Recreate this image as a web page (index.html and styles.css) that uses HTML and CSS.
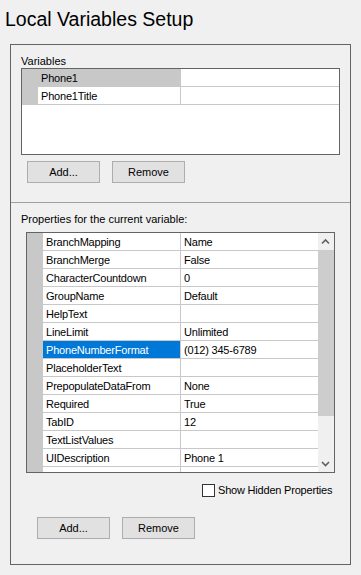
FILE: index.html
```html
<!DOCTYPE html>
<html lang="en">
<head>
  <meta charset="UTF-8" />
  <title>Local Variables Setup</title>
  <link rel="stylesheet" href="styles.css">
</head>
<body>
  <h1>Local Variables Setup</h1>

  <div class="group">
    <div class="top">
      <div class="label">Variables</div>
      <div class="vargrid">
        <div class="row selected">
          <div class="rh"></div>
          <div class="cell name">Phone1</div>
          <div class="cell value"></div>
        </div>
        <div class="row">
          <div class="rh"></div>
          <div class="cell name">Phone1Title</div>
          <div class="cell value"></div>
        </div>
      </div>
      <div class="buttons">
        <button>Add...</button>
        <button>Remove</button>
      </div>
    </div>

    <div class="bottom">
      <div class="label">Properties for the current variable:</div>
      <div class="propgrid">
        <div class="rows">
          <div class="row"><div class="rh"></div><div class="cell name">BranchMapping</div><div class="cell value">Name</div></div>
          <div class="row"><div class="rh"></div><div class="cell name">BranchMerge</div><div class="cell value">False</div></div>
          <div class="row"><div class="rh"></div><div class="cell name">CharacterCountdown</div><div class="cell value">0</div></div>
          <div class="row"><div class="rh"></div><div class="cell name">GroupName</div><div class="cell value">Default</div></div>
          <div class="row"><div class="rh"></div><div class="cell name">HelpText</div><div class="cell value"></div></div>
          <div class="row"><div class="rh"></div><div class="cell name">LineLimit</div><div class="cell value">Unlimited</div></div>
          <div class="row active"><div class="rh"></div><div class="cell name">PhoneNumberFormat</div><div class="cell value">(012) 345-6789</div></div>
          <div class="row"><div class="rh"></div><div class="cell name">PlaceholderText</div><div class="cell value"></div></div>
          <div class="row"><div class="rh"></div><div class="cell name">PrepopulateDataFrom</div><div class="cell value">None</div></div>
          <div class="row"><div class="rh"></div><div class="cell name">Required</div><div class="cell value">True</div></div>
          <div class="row"><div class="rh"></div><div class="cell name">TabID</div><div class="cell value">12</div></div>
          <div class="row"><div class="rh"></div><div class="cell name">TextListValues</div><div class="cell value"></div></div>
          <div class="row"><div class="rh"></div><div class="cell name">UIDescription</div><div class="cell value">Phone 1</div></div>
          <!-- next row is scrolled out of view -->
          <div class="row"><div class="rh"></div><div class="cell name"></div><div class="cell value"></div></div>
        </div>
        <div class="scrollbar">
          <div class="arrow">
            <svg width="16" height="17" viewBox="0 0 16 17"><polyline points="4,10.5 7.5,7 11,10.5" fill="none" stroke="#606060" stroke-width="1.6" /></svg>
          </div>
          <div class="track"><div class="thumb"></div></div>
          <div class="arrow">
            <svg width="16" height="17" viewBox="0 0 16 17"><polyline points="4,7 7.5,10.5 11,7" fill="none" stroke="#606060" stroke-width="1.6" /></svg>
          </div>
        </div>
      </div>
      <label class="check"><span class="box"></span>Show Hidden Properties</label>
      <div class="buttons lower">
        <button>Add...</button>
        <button>Remove</button>
      </div>
    </div>
  </div>
</body>
</html>
```

FILE: styles.css
```css
body {
  background-color: #f0f0f0;
  font-family: "Liberation Sans", Arial, sans-serif;
  font-size: 11px;
  color: #000;
  margin: 0;
  padding: 0;
}

h1 {
  margin: 0;
  padding: 7px 0 0 5px;
  font-size: 19.5px;
  font-weight: normal;
  line-height: 24px;
}

.group {
  margin: 13px 0 0 10px;
  width: 341px;
  border: 1px solid #646464;
  box-sizing: border-box;
}

.top {
  padding: 10px 0 19px 10px;
}

.bottom {
  border-top: 1px solid #a0a0a0;
  padding: 10px 0 25px 10px;
}

.label {
  line-height: 13px;
}

.vargrid {
  width: 319px;
  height: 87px;
  box-sizing: border-box;
  border: 1px solid #646464;
  background: #fff;
}

.row {
  display: flex;
  height: 18px;
}

.rh {
  width: 16px;
  flex: none;
  background: #c8c8c8;
}

.cell {
  box-sizing: border-box;
  height: 18px;
  line-height: 18px;
  padding-left: 3px;
  border-bottom: 1px solid #c8c8c8;
  letter-spacing: -0.2px;
  white-space: nowrap;
  overflow: hidden;
}

.name {
  flex: none;
  width: 143px;
  border-right: 1px solid #c8c8c8;
}

.value {
  flex: 1;
}

.selected .name {
  background: #c8c8c8;
}

.propgrid {
  display: flex;
  width: 309px;
  height: 241px;
  box-sizing: border-box;
  margin: 6px 0 0 5px;
  border: 1px solid #646464;
  background: #fff;
}

.rows {
  flex: 1;
  overflow: hidden;
}

.propgrid .name {
  width: 138px;
}

.active .name {
  background: #0078d7;
  color: #fff;
}

.scrollbar {
  width: 16px;
  display: flex;
  flex-direction: column;
  background: #f0f0f0;
}

.arrow {
  height: 17px;
}

.arrow svg {
  display: block;
}

.track {
  flex: 1;
}

.thumb {
  height: 166px;
  background: #cdcdcd;
}

.check {
  display: flex;
  align-items: center;
  gap: 3px;
  height: 13px;
  line-height: 13px;
  letter-spacing: -0.2px;
  margin: 11px 0 0 181px;
}

.box {
  width: 13px;
  height: 13px;
  box-sizing: border-box;
  border: 1px solid #333;
  background: #fff;
}

.buttons {
  display: flex;
  gap: 12px;
  margin: 6px 0 0 6px;
}

.buttons.lower {
  margin: 20px 0 0 16px;
}

button {
  width: 73px;
  height: 22px;
  box-sizing: border-box;
  padding: 0;
  background: #e1e1e1;
  border: 1px solid #adadad;
  font: inherit;
  color: #000;
}
```
